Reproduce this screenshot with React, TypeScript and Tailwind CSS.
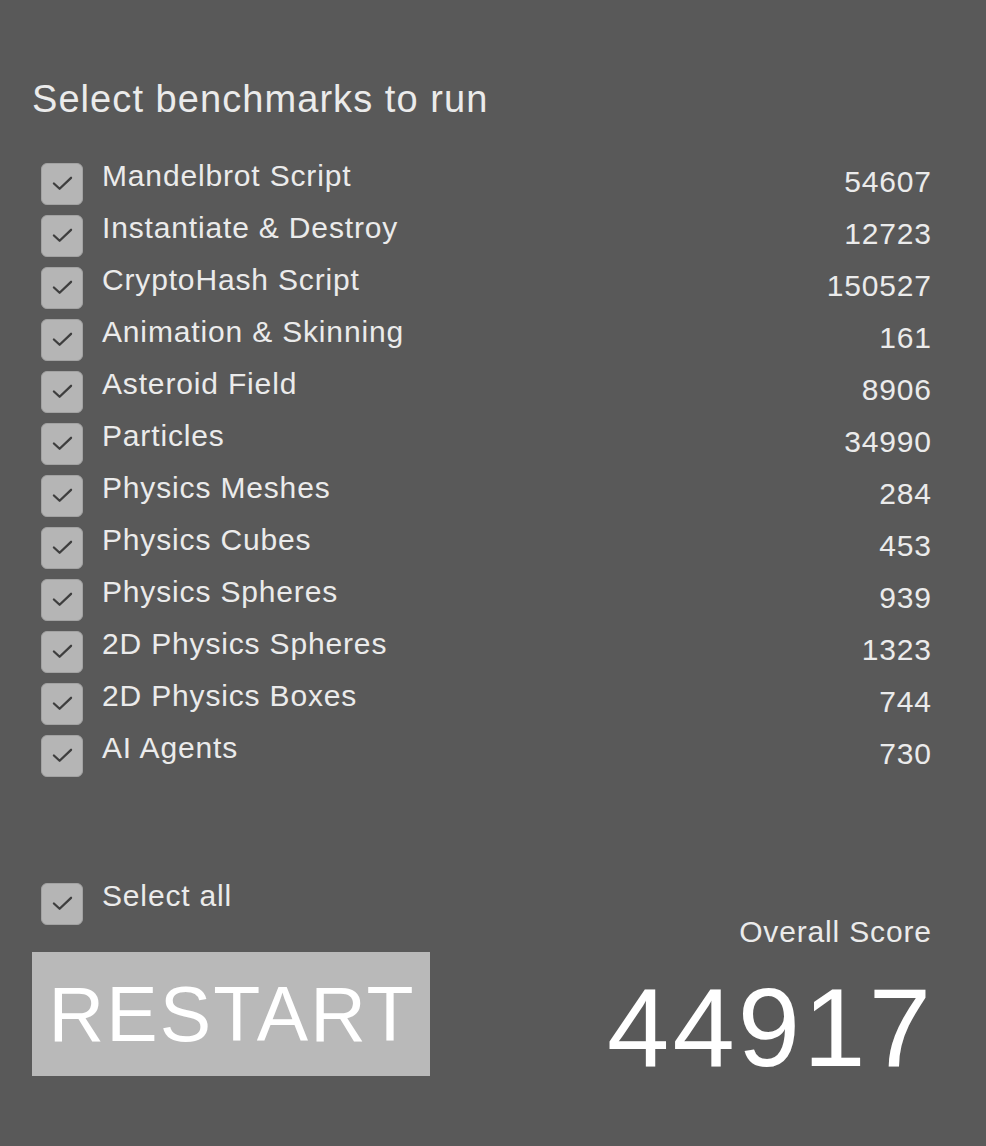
const benchmarks: [string, number][] = [
  ["Mandelbrot Script", 54607],
  ["Instantiate & Destroy", 12723],
  ["CryptoHash Script", 150527],
  ["Animation & Skinning", 161],
  ["Asteroid Field", 8906],
  ["Particles", 34990],
  ["Physics Meshes", 284],
  ["Physics Cubes", 453],
  ["Physics Spheres", 939],
  ["2D Physics Spheres", 1323],
  ["2D Physics Boxes", 744],
  ["AI Agents", 730],
];

function Checkbox() {
  return (
    <div className="mt-[2px] ml-[9px] flex h-[42px] w-[42px] shrink-0 items-center justify-center rounded-[6px] border border-[#a2a2a2] bg-[#b5b5b5]">
      <svg width="42" height="42" viewBox="0 0 42 42" fill="none">
        <path
          d="M12.5 20.5 L18.5 26 L30.5 14.5"
          stroke="#3e3e3e"
          strokeWidth="2.4"
          strokeLinecap="round"
          strokeLinejoin="round"
        />
      </svg>
    </div>
  );
}

export default function App() {
  return (
    <div
      className="min-h-[1146px] w-[986px] bg-[#595959] pt-[80px] pl-[32px] pr-[55px] text-[#ebebeb]"
      style={{ fontFamily: '"Liberation Sans", Arial, sans-serif' }}
    >
      <h1 className="text-[38px] leading-[38px] tracking-[0.028em]">Select benchmarks to run</h1>

      {/* benchmark list */}
      <div className="mt-[43px] flex flex-col">
        {benchmarks.map(([name, score]) => (
          <div key={name} className="flex h-[52px] items-start">
            <Checkbox />
            <div className="ml-[19px] flex-1 text-[30px] leading-[30px] tracking-[0.028em]">{name}</div>
            <div className="mt-[6px] -mr-[0.028em] text-[30px] leading-[30px] tracking-[0.028em]">{score}</div>
          </div>
        ))}
      </div>

      {/* bottom: select all, restart, overall score */}
      <div className="mt-[96px] flex items-start justify-between">
        <div className="flex flex-col">
          <div className="flex h-[52px] items-start">
            <Checkbox />
            <div className="ml-[19px] text-[30px] leading-[30px] tracking-[0.028em]">Select all</div>
          </div>
          <button className="mt-[19px] flex h-[124px] w-[398px] items-center justify-center bg-[#b9b9b9] pl-[0.028em] text-[77px] leading-[77px] tracking-[0.028em] text-white">
            RESTART
          </button>
        </div>
        <div className="flex flex-col items-end">
          <div className="mt-[36px] -mr-[0.028em] text-[30px] leading-[30px] tracking-[0.028em]">Overall Score</div>
          <div className="mt-[25px] -mr-[0.028em] text-[112px] leading-[112px] tracking-[0.028em] text-white">44917</div>
        </div>
      </div>
    </div>
  );
}
